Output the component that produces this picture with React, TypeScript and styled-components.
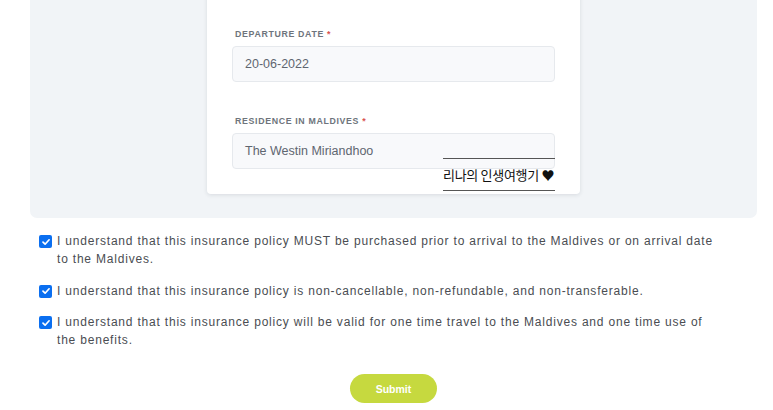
import React from "react";
import styled, { createGlobalStyle } from "styled-components";

const Global = createGlobalStyle`
  html, body { margin: 0; padding: 0; background: #ffffff; }
  body { font-family: "Liberation Sans", Arial, sans-serif; overflow: hidden; }
  * { box-sizing: border-box; }
`;

const Page = styled.div`
  width: 773px;
  height: 410px;
  overflow: hidden;
`;

const Panel = styled.section`
  margin: -18px 16px 0 30px;
  background: #f1f4f7;
  border-radius: 0 0 7px 7px;
  padding: 0 0 24px;
  display: flex;
  justify-content: center;
`;

const Card = styled.div`
  position: relative;
  width: 373px;
  background: #ffffff;
  border-radius: 0 0 4px 4px;
  box-shadow: 0 1px 4px rgba(30, 40, 60, 0.12);
  padding: 47px 25px 25px;
  display: flex;
  flex-direction: column;
`;

const Field = styled.div<{ $gap?: number }>`
  display: flex;
  flex-direction: column;
  margin-top: ${(p) => p.$gap ?? 0}px;
`;

const Label = styled.label`
  font-family: "Liberation Sans", Arial, sans-serif;
  font-size: 8.8px;
  font-weight: 700;
  letter-spacing: 0.65px;
  color: #6e747c;
  text-transform: uppercase;
  padding-left: 3px;
  line-height: 10px;
  margin-bottom: 7px;
`;

const Req = styled.span`
  color: #d9534f;
  margin-left: 3px;
`;

const Input = styled.div`
  height: 36px;
  background: #f8f9fb;
  border: 1px solid #e6e9ed;
  border-radius: 4px;
  display: flex;
  align-items: center;
  padding-left: 12px;
  font-family: "Liberation Sans", Arial, sans-serif;
  font-size: 12.5px;
  color: #5f6670;
`;

const Watermark = styled.div`
  position: absolute;
  left: 236px;
  top: 176px;
  width: 112px;
  height: 33px;
  border-top: 1.5px solid #555;
  border-bottom: 1.5px solid #555;
  display: flex;
  align-items: center;
  font-family: "Noto Sans CJK KR", "Noto Sans", sans-serif;
  font-size: 13px;
  color: #111;
  white-space: nowrap;
  letter-spacing: -0.3px;
`;

const List = styled.ul`
  list-style: none;
  margin: 14px 52px 0 39px;
  padding: 0;
  display: flex;
  flex-direction: column;
  gap: 13.5px;
`;

const Item = styled.li`
  display: flex;
  align-items: flex-start;
  gap: 5px;
  font-family: "Liberation Sans", Arial, sans-serif;
  font-size: 12px;
  line-height: 18px;
  letter-spacing: 0.8px;
  color: #4a4d52;
`;

const Box = styled.span`
  flex: 0 0 13px;
  width: 13px;
  height: 13px;
  margin-top: 3px;
  border-radius: 2px;
  background: #0b6ff0;
  display: flex;
  align-items: center;
  justify-content: center;
`;

const Actions = styled.div`
  display: flex;
  justify-content: center;
  margin-top: 25px;
  padding-left: 14px;
`;

const Button = styled.button`
  width: 87px;
  height: 29px;
  border: none;
  border-radius: 15px;
  background: #c6d93f;
  color: #ffffff;
  font-family: "Liberation Sans", Arial, sans-serif;
  font-weight: 700;
  font-size: 10.5px;
  cursor: pointer;
`;

const Check = () => (
  <Box>
    <svg width="10" height="10" viewBox="0 0 10 10">
      <path d="M2 5.2 L4.1 7.2 L8.1 2.8" fill="none" stroke="#fff" strokeWidth="1.7" strokeLinecap="round" strokeLinejoin="round" />
    </svg>
  </Box>
);

const terms = [
  "I understand that this insurance policy MUST be purchased prior to arrival to the Maldives or on arrival date to the Maldives.",
  "I understand that this insurance policy is non-cancellable, non-refundable, and non-transferable.",
  "I understand that this insurance policy will be valid for one time travel to the Maldives and one time use of the benefits.",
];

export default function App() {
  return (
    <Page>
      <Global />
      <Panel>
        <Card>
          <Field>
            <Label>
              Departure Date<Req>*</Req>
            </Label>
            <Input>20-06-2022</Input>
          </Field>
          <Field $gap={34}>
            <Label>
              Residence in Maldives<Req>*</Req>
            </Label>
            <Input>The Westin Miriandhoo</Input>
          </Field>
          <Watermark>리나의 인생여행기 ♥</Watermark>
        </Card>
      </Panel>
      <List>
        {terms.map((t) => (
          <Item key={t}>
            <Check />
            <span>{t}</span>
          </Item>
        ))}
      </List>
      <Actions>
        <Button>Submit</Button>
      </Actions>
    </Page>
  );
}
